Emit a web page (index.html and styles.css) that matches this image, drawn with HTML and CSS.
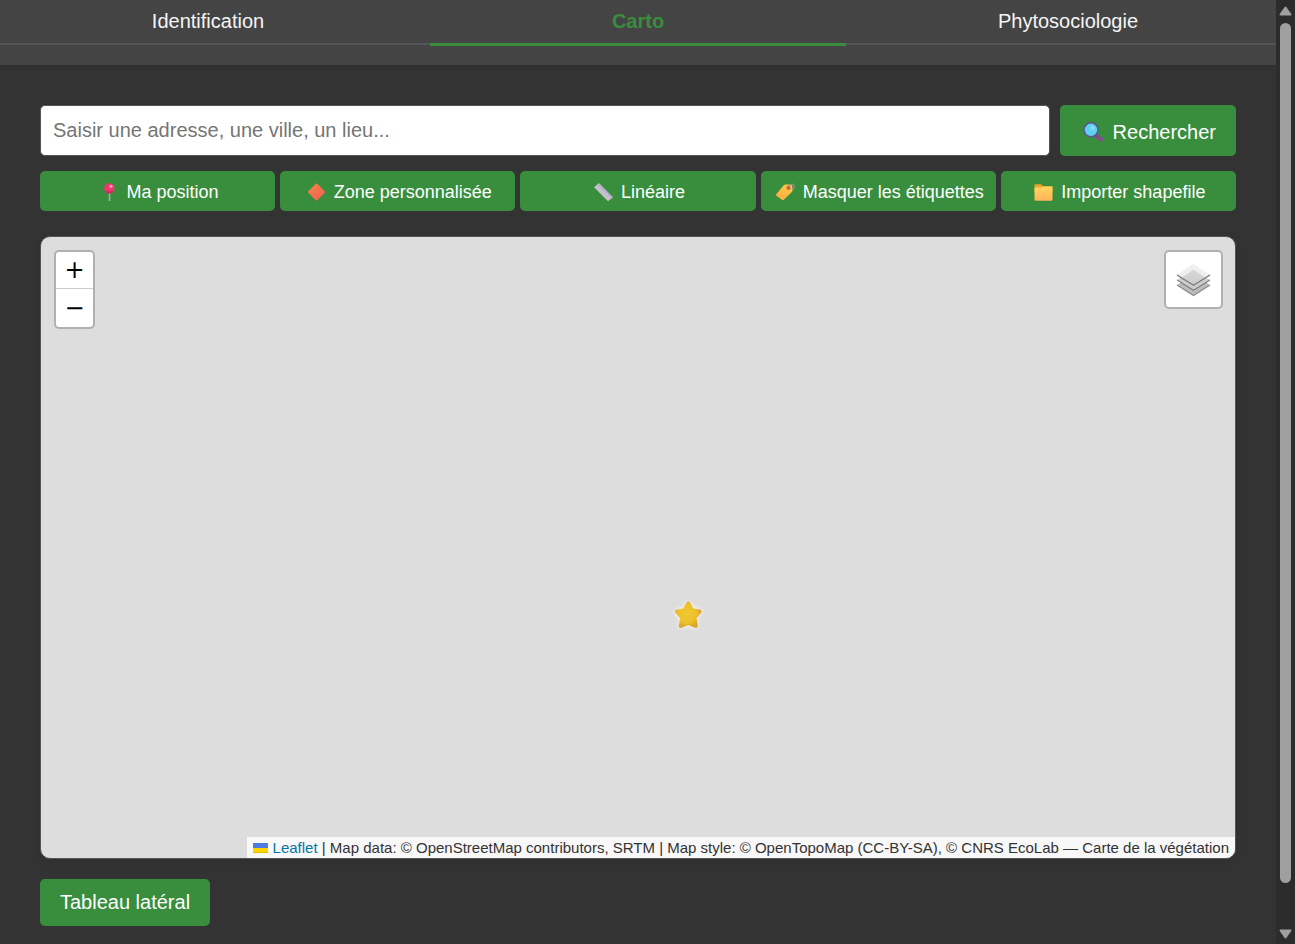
FILE: index.html
```html
<!DOCTYPE html>
<html lang="fr">
<head>
<meta charset="utf-8">
<title>Carto</title>
<link rel="stylesheet" href="styles.css">
</head>
<body>
<div class="page">
  <header class="header">
    <nav class="tabs">
      <a class="tab" href="#identification">Identification</a>
      <a class="tab tab-active" href="#carto" aria-current="page">Carto</a>
      <a class="tab" href="#phytosociologie">Phytosociologie</a>
    </nav>
  </header>
  <main class="main">
    <form class="search">
      <input class="search-input" type="text" aria-label="Adresse" placeholder="Saisir une adresse, une ville, un lieu...">
      <button class="btn search-btn" type="button">
        <svg width="27" height="22" viewBox="0 0 27 22" aria-hidden="true">
          <path d="M17 14L21 17.500" stroke="#8b4a91" stroke-width="4" stroke-linecap="round"/>
          <path d="M15 12.500l2 2" stroke="#6b4a8c" stroke-width="2"/>
          <circle cx="11" cy="7.800" r="7" fill="#5fd0ee" stroke="#5a5596" stroke-width="1.500"/>
          <circle cx="12.500" cy="6" r="2.500" fill="#7fdaf2"/>
        </svg>
        <span>Rechercher</span>
      </button>
    </form>
    <div class="tools">
      <button class="btn tool" type="button">
        <svg width="25" height="20" viewBox="0 0 25 20" aria-hidden="true">
          <path d="M12.500 10v9" stroke="#a9a9ae" stroke-width="1.600"/>
          <circle cx="12.300" cy="6.300" r="5.200" fill="#f0356f"/>
          <path d="M8 8.500a5 5 0 0 0 9 0q-4 2-9 0z" fill="#cf2464"/>
          <circle cx="14" cy="4.300" r="1.500" fill="#ffa3b8"/>
        </svg>
        <span>Ma position</span>
      </button>
      <button class="btn tool" type="button">
        <svg width="25" height="20" viewBox="0 0 25 20" aria-hidden="true">
          <defs><linearGradient id="diamond" x1="0" y1="0" x2="1" y2="1"><stop offset="0" stop-color="#f68242"/><stop offset="1" stop-color="#f1605a"/></linearGradient></defs>
          <path d="M12.500 2.500l7.500 7.500-7.500 7.500-7.500-7.500z" fill="url(#diamond)" stroke="url(#diamond)" stroke-width="2" stroke-linejoin="round"/>
        </svg>
        <span>Zone personnalisée</span>
      </button>
      <button class="btn tool" type="button">
        <svg width="25" height="20" viewBox="0 0 25 20" aria-hidden="true">
          <path d="M3.500 5.200L8 1.600 21.500 15.200 17 18.800z" fill="#c5c0cc" stroke="#c0bbc8" stroke-linejoin="round"/>
          <path d="M8.300 3.300l12 12" stroke="#a18dcc" stroke-width="1.200" stroke-dasharray="1 1.500"/>
        </svg>
        <span>Linéaire</span>
      </button>
      <button class="btn tool" type="button">
        <svg width="25" height="20" viewBox="0 0 25 20" aria-hidden="true">
          <defs><linearGradient id="tag" x1="1" y1="0" x2="0" y2="1"><stop offset="0" stop-color="#ffd03f"/><stop offset="1" stop-color="#ffa447"/></linearGradient></defs>
          <path d="M3.300 12.200L10.500 3.500q.8-.9 2-.9h5q1.500 0 1.700 1.500l.4 4q0 1-.8 1.800l-7.800 7.700q-1.300 1-2.500 0l-5.100-3.800q-1.200-.8-.1-1.600z" fill="url(#tag)"/>
          <circle cx="15.500" cy="5.800" r="1.900" fill="#a95a4b" stroke="#ec7b54"/>
          <path d="M15.500 5.600c1-4 5-4.300 5.800-1.800.6 2-1.100 3.500-2.500 3.500" fill="none" stroke="#9a8f87" stroke-width="1.100"/>
        </svg>
        <span>Masquer les étiquettes</span>
      </button>
      <button class="btn tool" type="button">
        <svg width="25" height="20" viewBox="0 0 25 20" aria-hidden="true">
          <defs><linearGradient id="folder" x1="0" y1="0" x2="0" y2="1"><stop offset="0" stop-color="#ffd75c"/><stop offset="1" stop-color="#ffb35c"/></linearGradient></defs>
          <path d="M3.500 3.500q0-1.200 1.200-1.200h5.500l2 2h8.300q1 0 1 1v5h-18z" fill="#eda32e"/>
          <path d="M3.500 5.500h6.500l2-1h8.500q1 0 1 1v12q0 1.200-1.200 1.200H4.700q-1.200 0-1.200-1.200z" fill="url(#folder)"/>
        </svg>
        <span>Importer shapefile</span>
      </button>
    </div>
    <section class="map" aria-label="Carte">
      <div class="zoom">
        <button class="zoom-btn" type="button" aria-label="Zoom avant">+</button>
        <button class="zoom-btn" type="button" aria-label="Zoom arrière">−</button>
      </div>
      <button class="layers" type="button" aria-label="Couches">
        <svg width="35" height="35" viewBox="0 0 35 35" aria-hidden="true">
          <defs><linearGradient id="sheet" x1="0" y1="0" x2="0" y2="1"><stop offset="0" stop-color="#d9d9d9"/><stop offset="1" stop-color="#cbcbcb"/></linearGradient></defs>
          <path d="M17.500 13L34 23 17.500 33.500 1 23z" fill="#bcbcbc"/>
          <path d="M1 23l16.500 10.500L34 23" fill="none" stroke="#8c8c8c" stroke-width="1.300"/>
          <path d="M17.500 8L34 18 17.500 28.300 1 18z" fill="#cecece"/>
          <path d="M1 18l16.500 10.300L34 18" fill="none" stroke="#808080" stroke-width="1.300"/>
          <path d="M17.500 2L34 13 17.500 23.300 1 13z" fill="#efefef"/>
          <path d="M17.500 7.500L29 15.500 17.500 22.500 6 15.500z" fill="url(#sheet)"/>
          <path d="M1 13l16.500 10.300L34 13" fill="none" stroke="#777" stroke-width="1.300"/>
        </svg>
      </button>
      <svg class="marker" width="40" height="40" viewBox="0 0 40 40" role="img" aria-label="Étoile">
        <defs><radialGradient id="star" cx=".45" cy=".45" r=".6"><stop offset="0" stop-color="#efc933"/><stop offset=".7" stop-color="#edc02a"/><stop offset="1" stop-color="#dba528"/></radialGradient></defs>
        <path d="M20.300 8.500l3.800 6.800 7.400 1.200-5 6.200 1.300 8.300-7.500-3-7.500 3 1.300-8.300-5-6.200 7.400-1.200z" fill="url(#star)" stroke="url(#star)" stroke-width="4" stroke-linejoin="round"/>
      </svg>
      <div class="attribution">
        <svg width="15" height="10" viewBox="0 0 15 10" aria-hidden="true"><path fill="#4c7be1" d="M0 0h15v5H0z"/><path fill="#ffd500" d="M0 5h15v4H0z"/><path fill="#e0bc00" d="M0 9h15v1H0z"/></svg>
        <a class="attribution-link" href="#leaflet">Leaflet</a> | Map data: © OpenStreetMap contributors, SRTM | Map style: © OpenTopoMap (CC-BY-SA), © CNRS EcoLab — Carte de la végétation
      </div>
    </section>
    <button class="btn side-btn" type="button">Tableau latéral</button>
  </main>
</div>
<div class="scrollbar" aria-hidden="true">
  <svg width="13" height="11" viewBox="0 0 13 11"><path d="M6.500 2.500L11.500 9.500h-10z" fill="#9f9f9f" stroke="#9f9f9f" stroke-width="2" stroke-linejoin="round"/></svg>
  <div class="track"><div class="thumb"></div></div>
  <svg width="13" height="11" viewBox="0 0 13 11"><path d="M6.500 8.500L1.500 1.500h10z" fill="#9f9f9f" stroke="#9f9f9f" stroke-width="2" stroke-linejoin="round"/></svg>
</div>
</body>
</html>
```
FILE: styles.css
```css
* {
  box-sizing: border-box;
}

body {
  margin: 0;
  display: flex;
  min-height: 100vh;
  background: #333;
  color: #f5f5f5;
  font-family: "Liberation Sans", Arial, sans-serif;
  font-size: 20px;
  line-height: 23px;
}

button,
input {
  font: inherit;
}

.page {
  flex: 1;
  min-width: 0;
  display: flex;
  flex-direction: column;
}

.header {
  padding-bottom: 20px;
  background: #444;
  box-shadow: 0 2px 8px rgba(0, 0, 0, 0.1);
}

.tabs {
  display: grid;
  grid-template-columns: repeat(3, 1fr);
  column-gap: 14px;
  height: 45px;
  border-bottom: 2px solid #555;
}

.tab {
  height: 46px;
  padding-top: 10px;
  color: #f5f5f5;
  text-align: center;
  text-decoration: none;
}

.tab-active {
  border-bottom: 3px solid #388e3c;
  color: #388e3c;
  font-weight: bold;
}

.main {
  flex: 1;
  display: flex;
  flex-direction: column;
  padding: 40px 40px 18px;
}

.btn {
  display: flex;
  align-items: center;
  justify-content: center;
  border: 0;
  border-radius: 5px;
  background: #388e3c;
  color: #fff;
  white-space: nowrap;
  cursor: pointer;
}

.search {
  display: flex;
  gap: 10px;
}

.search-input {
  flex: 1;
  min-width: 0;
  padding: 12px 12px 13px;
  border: 1px solid #555;
  border-radius: 5px;
  background: #fff;
}

.search-input::placeholder {
  color: #757575;
}

.search-btn {
  gap: 6px;
  padding: 16px 20px 12px;
}

.tools {
  display: grid;
  grid-template-columns: repeat(5, 1fr);
  gap: 5px;
  margin-top: 15px;
}

.tool {
  gap: 5px;
  height: 40px;
  padding: 2px 0 0;
  font-size: 18px;
}

.map {
  position: relative;
  flex: 1;
  margin: 25px 0 20px;
  border: 1px solid #555;
  border-radius: 10px;
  background: #ddd;
  overflow: hidden;
  box-shadow: 0 2px 8px rgba(0, 0, 0, 0.1);
}

.zoom,
.layers {
  position: absolute;
  top: 13px;
  border: 2px solid rgba(0, 0, 0, 0.2);
  border-radius: 5px;
  background: #fff;
  background-clip: padding-box;
}

.zoom {
  left: 13px;
  display: flex;
  flex-direction: column;
}

.zoom-btn {
  width: 37px;
  height: 36px;
  padding: 0;
  border: 0;
  background: none;
  color: #000;
  font-family: "DejaVu Sans", sans-serif;
  font-size: 24px;
  line-height: 36px;
}

.zoom-btn + .zoom-btn {
  height: 39px;
  border-top: 1px solid #ccc;
}

.layers {
  right: 12px;
  display: grid;
  place-items: center;
  width: 59px;
  height: 59px;
  padding: 0;
}

.marker {
  position: absolute;
  left: 627px;
  top: 358px;
  filter: drop-shadow(0 0 2px #fff);
}

.attribution {
  position: absolute;
  right: 0;
  bottom: 0;
  padding: 0 6px;
  background: rgba(255, 255, 255, 0.8);
  color: #333;
  font-size: 15px;
  line-height: 21px;
}

.attribution-link {
  color: #0078a8;
  text-decoration: none;
}

.side-btn {
  align-self: flex-start;
  padding: 12px 20px;
}

.scrollbar {
  display: flex;
  flex-direction: column;
  align-items: center;
  width: 19px;
  padding: 5px 0 4px;
  background: #2c2c2c;
}

.track {
  flex: 1;
  width: 11px;
  padding: 7px 0 46px;
}

.thumb {
  height: 100%;
  border-radius: 6px;
  background: #9f9f9f;
}
```
